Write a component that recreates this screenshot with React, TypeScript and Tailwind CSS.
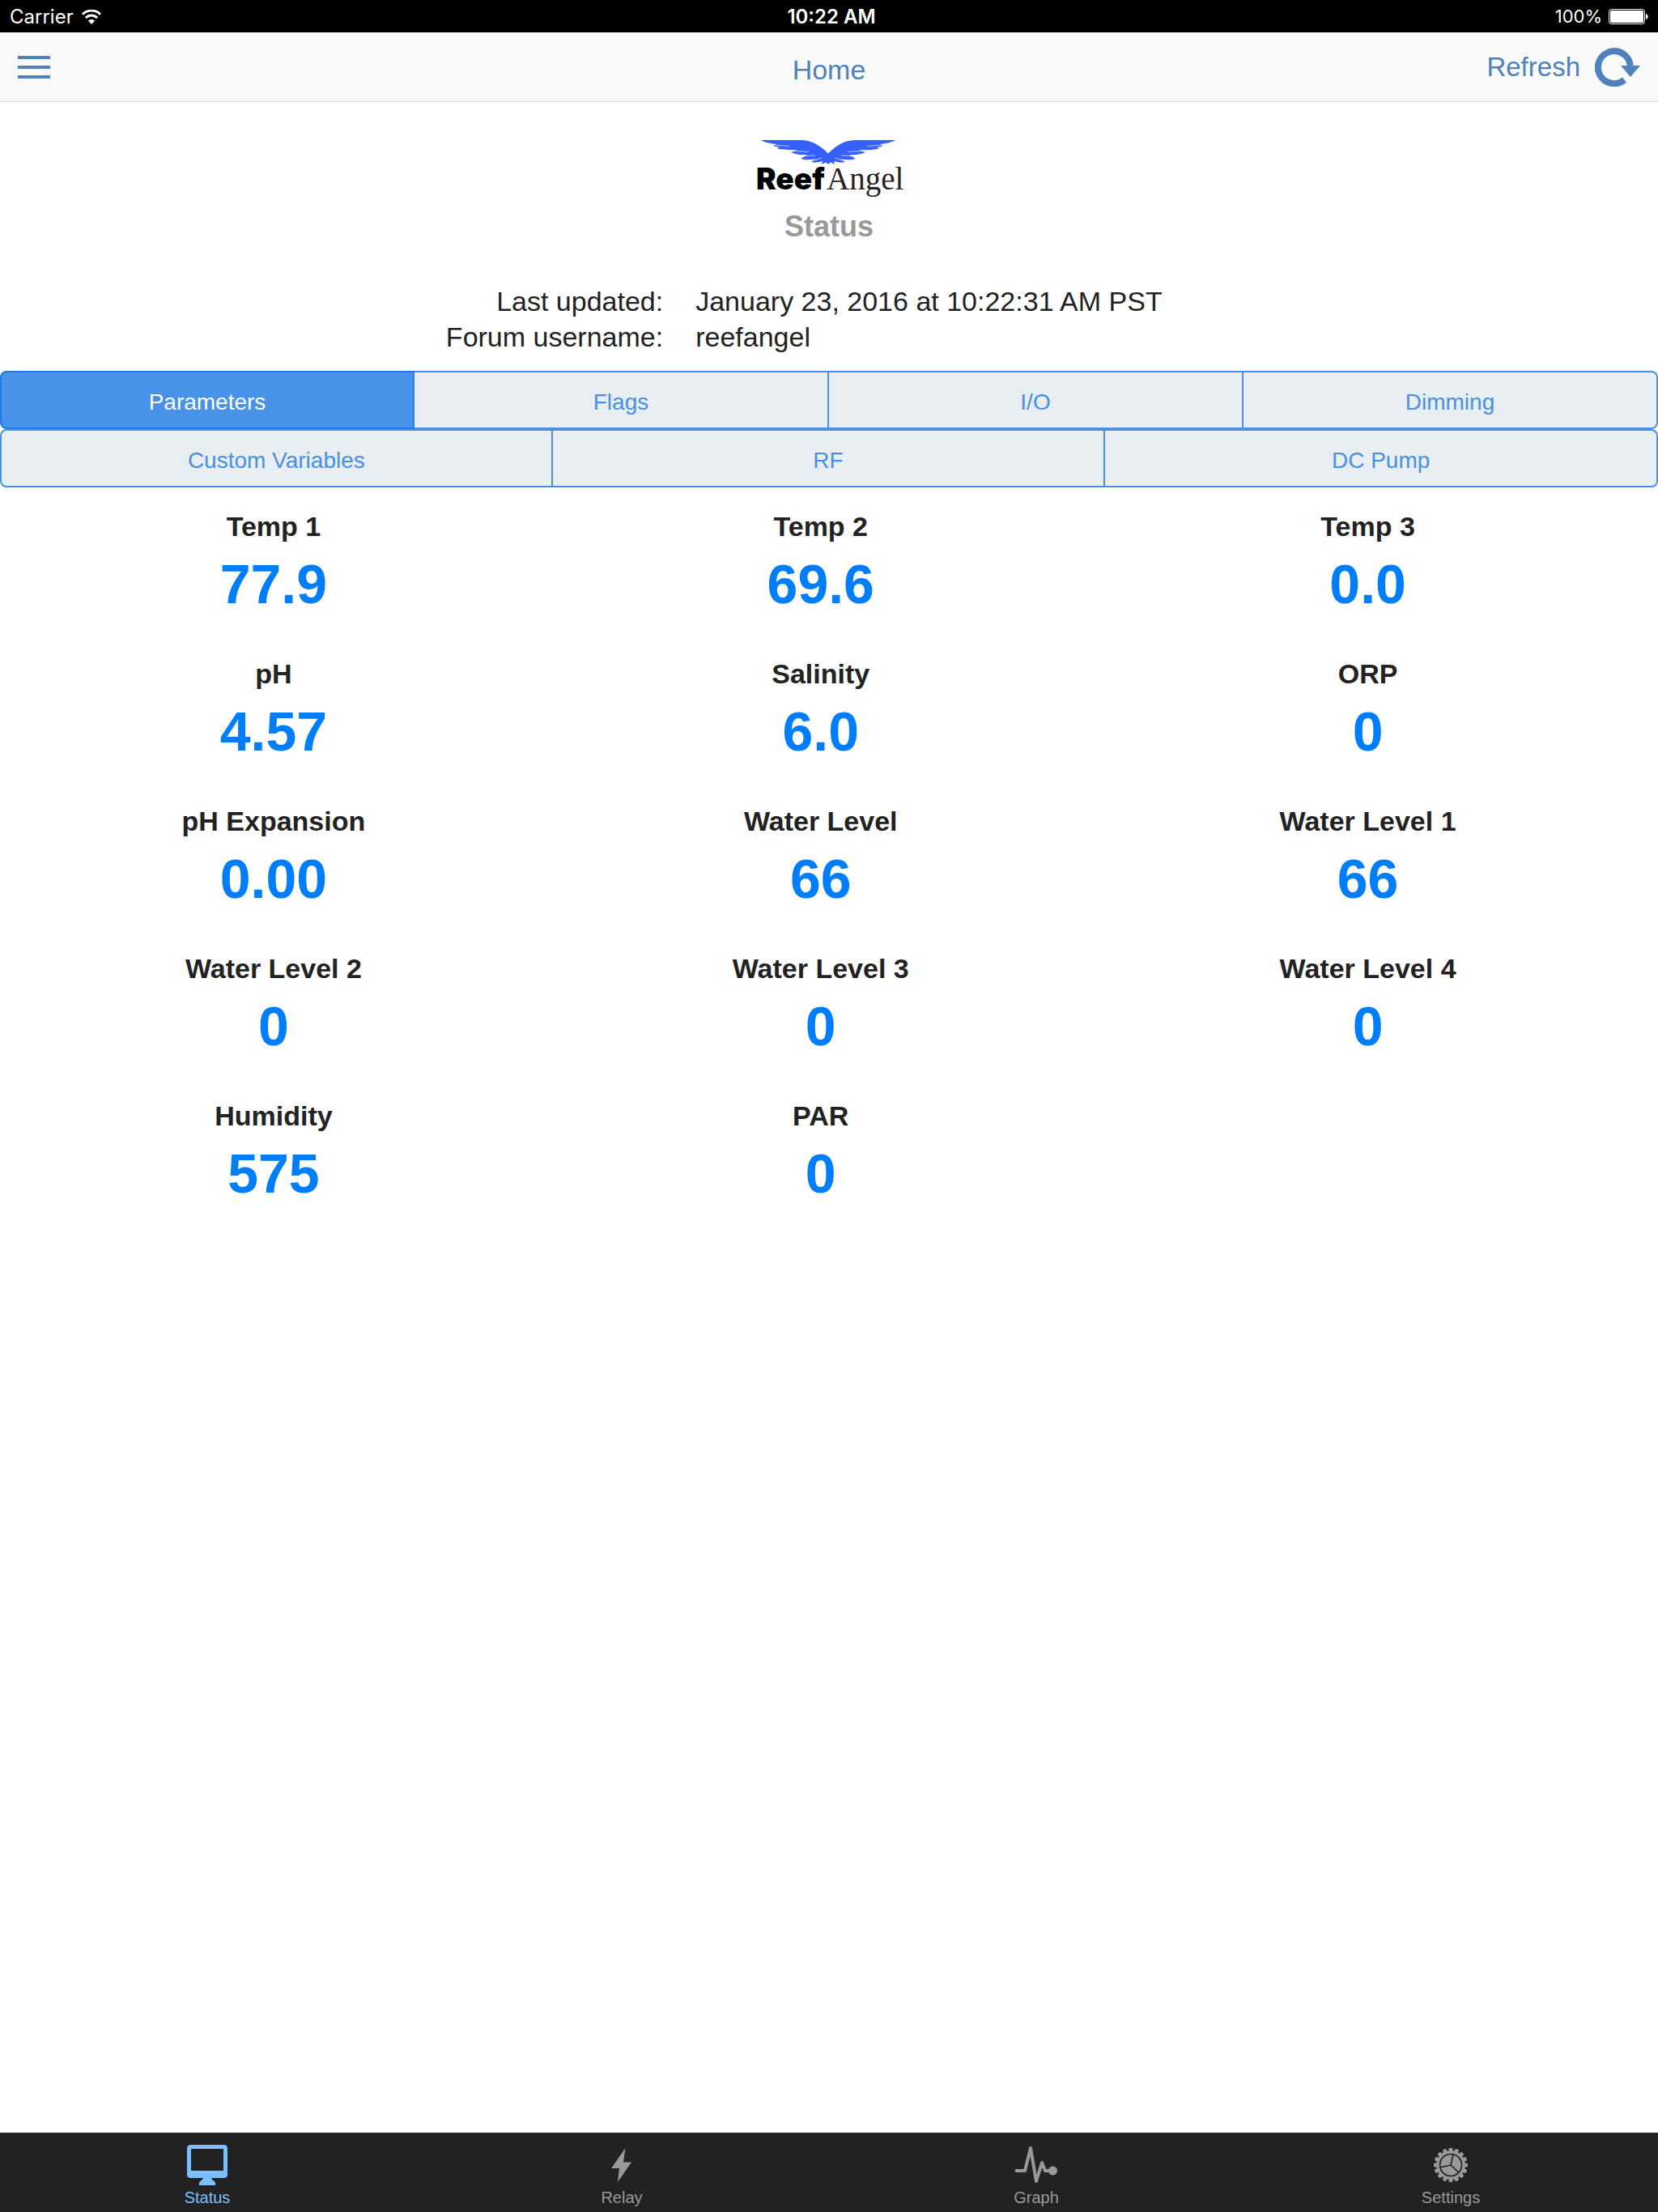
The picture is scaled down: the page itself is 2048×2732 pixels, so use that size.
import React from 'react';

const parameters = [
  ['Temp 1', '77.9'],
  ['Temp 2', '69.6'],
  ['Temp 3', '0.0'],
  ['pH', '4.57'],
  ['Salinity', '6.0'],
  ['ORP', '0'],
  ['pH Expansion', '0.00'],
  ['Water Level', '66'],
  ['Water Level 1', '66'],
  ['Water Level 2', '0'],
  ['Water Level 3', '0'],
  ['Water Level 4', '0'],
  ['Humidity', '575'],
  ['PAR', '0'],
];

function WifiIcon() {
  return (
    <svg viewBox="0 0 24 18" className="h-[18px] w-6" fill="none" stroke="#fff" aria-hidden="true">
      <path d="M1 5.6C7.2-.4 16.800-.4 23 5.600" strokeWidth="3" />
      <path d="M4.900 10C9 6 15 6 19.100 10" strokeWidth="3" />
      <path d="M12 18L7.900 13.600C10.200 11.500 13.800 11.500 16.100 13.600Z" fill="#fff" stroke="none" />
    </svg>
  );
}

function BatteryIcon() {
  return (
    <svg viewBox="0 0 49 19" className="h-[19px] w-[49px]" aria-hidden="true">
      <rect x=".5" y=".5" width="44" height="18" rx="3" fill="none" stroke="#fff" />
      <rect x="2" y="2" width="41" height="15" rx="1.500" fill="#fff" />
      <path d="M46 6c3.500 1 3.500 6 0 7z" fill="#fff" />
    </svg>
  );
}

function RefreshIcon() {
  return (
    <svg viewBox="0 0 56 48" className="h-12 w-14" aria-hidden="true">
      <path d="M36.500 39.700A20 20 0 1 1 43.800 22" fill="none" stroke="#4f81bc" strokeWidth="8" />
      <path d="M32 22H56L44 36Z" fill="#4f81bc" />
    </svg>
  );
}

function Wing() {
  return (
    <>
      <path
        fill="#3660fa"
        d="M84.500 17C76 9 66 0 50 0L1 0C5 2.500 12 4.500 20 5L16 7C19 8.500 21 8.500 24 8.500L21 10.500C30 12.500 37 12 46 12.500L38 15C44 18 50 18 58 18.500L50 23C56 25 62 24 69 23.500L63 27C68 28.500 72 27.500 77 26L76 30L81 27.500L84.500 30Z"
      />
      <path
        fill="none"
        stroke="#fff"
        strokeOpacity=".6"
        strokeWidth="1"
        d="M16 6L36 7.500M40 13.500L60 14.500M56 19.500L68 19M67 25L76 22"
      />
    </>
  );
}

function Logo() {
  return (
    <svg viewBox="0 0 184 74" className="h-[74px] w-[184px]" role="img" aria-label="Reef Angel">
      <g transform="translate(7 1)">
        <Wing />
      </g>
      <g transform="translate(175 1) scale(-1 1)">
        <Wing />
      </g>
      <text x="2" y="62" fontFamily="Inter" fontWeight="900" fontSize="37" fill="#000">
        Reef
      </text>
      <text x="89" y="62" fontFamily="Liberation Serif" fontSize="39" fill="#2a2226">
        Angel
      </text>
    </svg>
  );
}

function MonitorIcon() {
  return (
    <svg viewBox="0 0 50 50" className="h-[50px] w-[50px]" fill="currentColor" aria-hidden="true">
      <path
        fillRule="evenodd"
        d="M4.500 0H45.500Q50 0 50 4.500V36.500Q50 41 45.500 41H30C31 44 35 45 35 47V50H15V47C15 45 19 44 20 41H4.500Q0 41 0 36.500V4.500Q0 0 4.500 0ZM5 5V32H45V5Z"
      />
    </svg>
  );
}

function BoltIcon() {
  return (
    <svg viewBox="0 0 50 50" className="h-[50px] w-[50px]" fill="currentColor" aria-hidden="true">
      <path d="M17.500 4L0 29H10L8 46L25 21.500H15Z" transform="translate(12 0)" />
    </svg>
  );
}

function PulseIcon() {
  return (
    <svg viewBox="0 0 54 50" className="h-[50px] w-[54px]" aria-hidden="true">
      <path
        d="M1 32H13L20 4L27 45L34 22L38 32H46"
        fill="none"
        stroke="currentColor"
        strokeWidth="4"
        strokeLinejoin="round"
      />
      <circle cx="47.500" cy="32" r="5.500" fill="currentColor" />
    </svg>
  );
}

function GearIcon() {
  return (
    <svg viewBox="0 0 50 50" className="h-[50px] w-[50px]" aria-hidden="true">
      <g fill="currentColor">
        {Array.from({ length: 16 }, (_, i) => (
          <path key={i} d="M21.800 9L23 4H27L28.200 9Z" transform={`rotate(${i * 22.5} 25 25)`} />
        ))}
        <circle cx="25" cy="25" r="17.500" />
      </g>
      <g fill="none" stroke="#222" strokeWidth="1.700">
        <circle cx="25" cy="25" r="13.500" />
        <path d="M25 25L28 12M25 25L35 34.500M25 25L12 28" />
      </g>
    </svg>
  );
}

const tabs = [
  { label: 'Status', icon: <MonitorIcon />, active: true },
  { label: 'Relay', icon: <BoltIcon />, active: false },
  { label: 'Graph', icon: <PulseIcon />, active: false },
  { label: 'Settings', icon: <GearIcon />, active: false },
];

function Segments({ items, active }: { items: string[]; active?: string }) {
  return (
    <div className="grid h-[72px] auto-cols-fr grid-flow-col text-[28px]">
      {items.map((item) => (
        <button
          key={item}
          type="button"
          className={
            item === active
              ? 'border-y-2 border-r-2 border-[#1f7be6] bg-[#4992e9] pt-1.5 text-white first:rounded-l-lg first:border-l-2'
              : 'border-y-2 border-r-2 border-[#4a90e2] bg-[#e8eef1] pt-1.5 text-[#4a90e2] first:rounded-l-lg first:border-l-2 last:rounded-r-lg'
          }
        >
          {item}
        </button>
      ))}
    </div>
  );
}

export default function App() {
  return (
    <div className="flex min-h-screen flex-col bg-white font-['Liberation_Sans',Arial,sans-serif] text-[#222]">
      <div className="grid h-10 grid-cols-3 items-center bg-black px-3 pt-0.5 font-[Inter,sans-serif] text-2xl text-white">
        <div className="flex items-center gap-2.5">
          <span>Carrier</span>
          <WifiIcon />
        </div>
        <div className="pl-1.5 text-center font-semibold">10:22 AM</div>
        <div className="flex items-center justify-end gap-2">
          <span className="text-[22px]">100%</span>
          <BatteryIcon />
        </div>
      </div>

      <header className="grid h-[86px] grid-cols-3 items-center border-b border-[#d8d8d8] bg-[#fafafa] px-[22px] text-[34px] text-[#4f81bc]">
        <button type="button" aria-label="Menu" className="flex w-10 flex-col gap-2">
          <span className="h-1 bg-[#4f81bc]" />
          <span className="h-1 bg-[#4f81bc]" />
          <span className="h-1 bg-[#4f81bc]" />
        </button>
        <h1 className="pt-2 text-center">Home</h1>
        <button type="button" className="flex items-center gap-[18px] justify-self-end text-[33px]">
          Refresh
          <RefreshIcon />
        </button>
      </header>

      <main className="flex-1">
        <div className="flex flex-col items-center pt-[46px]">
          <Logo />
          <h2 className="mt-3.5 text-[36px] leading-10 font-bold text-[#999]">Status</h2>
        </div>
        <dl className="mt-[50px] grid grid-cols-[40%_1fr] gap-x-10 text-[34px] leading-[44px]">
          <dt className="text-right">Last updated:</dt>
          <dd>January 23, 2016 at 10:22:31 AM PST</dd>
          <dt className="text-right">Forum username:</dt>
          <dd>reefangel</dd>
        </dl>
        <div className="mt-5">
          <Segments items={['Parameters', 'Flags', 'I/O', 'Dimming']} active="Parameters" />
          <Segments items={['Custom Variables', 'RF', 'DC Pump']} />
        </div>
        <div className="mt-6 grid w-[99%] grid-cols-3 gap-y-10 text-center font-bold">
          {parameters.map(([label, value]) => (
            <div key={label}>
              <div className="text-[34px] leading-[48px]">{label}</div>
              <div className="text-[68px] leading-[94px] text-[#007efa]">{value}</div>
            </div>
          ))}
        </div>
      </main>

      <nav className="grid h-[98px] grid-cols-4 bg-[#222]">
        {tabs.map((tab) => (
          <a
            key={tab.label}
            href="#"
            className={
              tab.active
                ? 'flex flex-col items-center pt-[15px] text-xl leading-[30px] text-[#7abfff]'
                : 'flex flex-col items-center pt-[15px] text-xl leading-[30px] text-[#999]'
            }
          >
            {tab.icon}
            <span>{tab.label}</span>
          </a>
        ))}
      </nav>
    </div>
  );
}
